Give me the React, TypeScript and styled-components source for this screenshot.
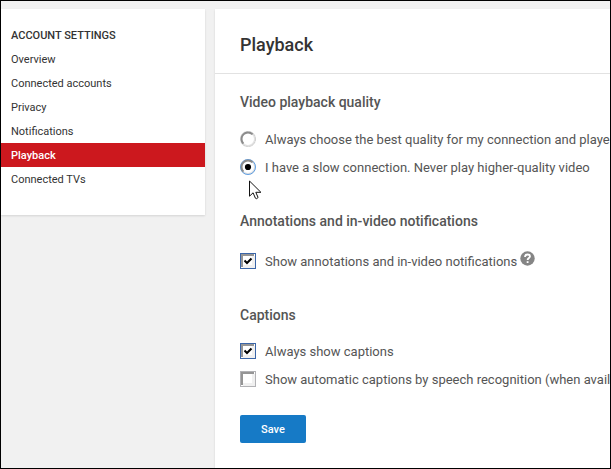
import React, { useState } from "react";
import styled, { createGlobalStyle } from "styled-components";

const GlobalStyle = createGlobalStyle`
  *, *::before, *::after { box-sizing: border-box; }
  body {
    margin: 0;
    font-family: Roboto, "Liberation Sans", sans-serif;
    font-size: 13px;
    color: #555;
    background: #f1f1f1;
  }
`;

const Page = styled.div`
  display: flex;
  align-items: flex-start;
  gap: 10px;
  min-height: 100vh;
  padding-top: 8px;
  border: 1px solid #000;
  background: #f1f1f1;
  overflow: hidden;
`;

const Sidebar = styled.nav`
  flex: none;
  width: 204px;
  padding: 14px 0 24px;
  background: #fff;
  box-shadow: 0 1px 2px rgba(0, 0, 0, 0.12);
`;

const SidebarTitle = styled.h2`
  margin: 0;
  padding: 2px 10px 0;
  font-size: 11px;
  font-weight: 500;
  line-height: 22px;
  color: #333;
  text-transform: uppercase;
`;

const NavList = styled.ul`
  margin: 0;
  padding: 0;
  list-style: none;
`;

const NavLink = styled.a<{ $active?: boolean }>`
  display: block;
  padding: 2px 10px 0;
  font-size: 11px;
  font-weight: ${(p) => (p.$active ? 500 : 400)};
  line-height: 22px;
  text-decoration: none;
  color: ${(p) => (p.$active ? "#fff" : "#333")};
  background: ${(p) => (p.$active ? "#cc181e" : "transparent")};
`;

const Main = styled.main`
  flex: 1;
  min-width: 0;
  align-self: stretch;
  background: #fff;
  box-shadow: 0 1px 2px rgba(0, 0, 0, 0.12);
  overflow: hidden;
  white-space: nowrap;
`;

const Header = styled.header`
  padding: 24px 25px 16px;
  border-bottom: 1px solid #e2e2e2;
`;

const Title = styled.h1`
  margin: 0;
  font-size: 18px;
  font-weight: 500;
  line-height: 24px;
  color: #333;
`;

const Form = styled.form`
  display: flex;
  flex-direction: column;
  align-items: flex-start;
  gap: 30px;
  padding: 18px 25px 24px;
`;

const Section = styled.section<{ $gap?: number }>`
  display: flex;
  flex-direction: column;
  gap: ${(p) => p.$gap ?? 12}px;
`;

const SectionTitle = styled.h2`
  margin: 0;
  font-size: 14px;
  font-weight: 500;
  line-height: 20px;
  color: #555;
`;

const Options = styled.div``;

const Row = styled.div`
  display: flex;
  align-items: center;
  height: 28px;
`;

const Label = styled.label`
  display: flex;
  align-items: center;
  gap: 9px;
`;

const LabelText = styled.span`
  padding-top: 2px;
  line-height: 20px;
`;

const Control = styled.span`
  position: relative;
  display: grid;
  flex: none;
  width: 16px;
  height: 16px;
`;

const Mark = styled.svg`
  position: absolute;
  inset: 0;
  width: 16px;
  height: 16px;
  overflow: visible;
  pointer-events: none;
`;

const Input = styled.input`
  appearance: none;
  width: 16px;
  height: 16px;
  margin: 0;
  background: #fff;
  border-radius: ${(p) => (p.type === "radio" ? "50%" : "0")};
`;

const Pointer = styled.svg`
  position: absolute;
  top: 21px;
  left: 9px;
  z-index: 1;
  width: 13px;
  height: 21px;
  pointer-events: none;
`;

const HelpButton = styled.button`
  display: flex;
  align-self: flex-start;
  margin: 4px 0 0 3px;
  padding: 0;
  border: 0;
  background: none;
`;

const SaveButton = styled.button`
  height: 28px;
  margin-top: -8px;
  min-width: 66px;
  padding: 2px 20px 0;
  border: 0;
  border-radius: 2px;
  background: #167ac6;
  color: #fff;
  font: 500 11px/26px Roboto, "Liberation Sans", sans-serif;
`;

type ChoiceProps = {
  id: string;
  checked: boolean;
  onChange: () => void;
  children: React.ReactNode;
};

function Radio({ id, checked, onChange, pointer, children }: ChoiceProps & { pointer?: boolean }) {
  return (
    <Label htmlFor={id}>
      <Control>
        <Input type="radio" id={id} name="quality" checked={checked} onChange={onChange} />
        <Mark viewBox="0 0 16 16" fill="none" aria-hidden="true">
          <circle cx="8" cy="8" r="7" stroke="#e2e2e2" strokeWidth="2" />
          <circle cx="8" cy="8" r="7.500" stroke={checked ? "#5d9fe6" : "#cfcfcf"} strokeDasharray={checked ? undefined : "2 1"} />
          <path d="M3.400 12.600A6.500 6.500 0 0 1 12.600 3.400" stroke="#8c8c8c" strokeWidth="2" />
          {checked && <circle cx="8" cy="8" r="3.100" fill="#000" />}
        </Mark>
        {pointer && (
          <Pointer viewBox="0 0 13 21" aria-hidden="true">
            <path
              d="M.5 1v15.200l3.600-3.400 2.300 5.400q1 1.300 2.700-.7l-2.300-5.200h5.100z"
              fill="#fff"
              stroke="#111"
              strokeWidth="1"
            />
          </Pointer>
        )}
      </Control>
      <LabelText>{children}</LabelText>
    </Label>
  );
}

function Checkbox({ id, checked, onChange, children }: ChoiceProps) {
  return (
    <Label htmlFor={id}>
      <Control>
        <Input type="checkbox" id={id} checked={checked} onChange={onChange} />
        <Mark viewBox="0 0 16 16" fill="none" aria-hidden="true">
          <path d="M3 13.500h10.500V3" stroke="#f0f0f0" strokeWidth="3" />
          <path d="M2 14V2h12" stroke="#959595" strokeWidth="2" />
          <rect x=".5" y=".5" width="15" height="15" stroke={checked ? "#3a65a8" : "#b2b2b5"} />
          {checked && <path d="M4.500 7.500 7 10l4.500-4.500" stroke="#000" strokeWidth="2" />}
        </Mark>
      </Control>
      <LabelText>{children}</LabelText>
    </Label>
  );
}

const links = ["Overview", "Connected accounts", "Privacy", "Notifications", "Playback", "Connected TVs"];

export default function App() {
  const [quality, setQuality] = useState("slow");
  const [annotations, setAnnotations] = useState(true);
  const [captions, setCaptions] = useState(true);
  const [automatic, setAutomatic] = useState(false);

  return (
    <>
      <GlobalStyle />
      <Page>
        <Sidebar aria-label="Account settings">
          <SidebarTitle>Account settings</SidebarTitle>
          <NavList>
            {links.map((name) => (
              <li key={name}>
                <NavLink href="#" $active={name === "Playback"} aria-current={name === "Playback" ? "page" : undefined}>
                  {name}
                </NavLink>
              </li>
            ))}
          </NavList>
        </Sidebar>
        <Main>
          <Header>
            <Title>Playback</Title>
          </Header>
          <Form onSubmit={(e) => e.preventDefault()}>
            <Section $gap={13}>
              <SectionTitle>Video playback quality</SectionTitle>
              <Options>
                <Row>
                  <Radio id="best" checked={quality === "best"} onChange={() => setQuality("best")}>
                    Always choose the best quality for my connection and playe
                  </Radio>
                </Row>
                <Row>
                  <Radio id="slow" checked={quality === "slow"} onChange={() => setQuality("slow")} pointer>
                    I have a slow connection. Never play higher-quality video
                  </Radio>
                </Row>
              </Options>
            </Section>
            <Section $gap={16}>
              <SectionTitle>Annotations and in-video notifications</SectionTitle>
              <Row>
                <Checkbox id="annotations" checked={annotations} onChange={() => setAnnotations(!annotations)}>
                  Show annotations and in-video notifications
                </Checkbox>
                <HelpButton type="button" aria-label="Help">
                  <svg width="15" height="15" viewBox="0 0 15 15" fill="none" aria-hidden="true">
                    <circle cx="7.500" cy="7.500" r="7.200" fill="#858585" />
                    <path d="M5 6c0-1.700 1-2.500 2.500-2.500S10 4.300 10 5.600C10 7 7.600 7.200 7.600 9" stroke="#fff" strokeWidth="1.800" />
                    <path d="M6.700 10.200h1.800V12H6.700z" fill="#fff" />
                  </svg>
                </HelpButton>
              </Row>
            </Section>
            <Section>
              <SectionTitle>Captions</SectionTitle>
              <Options>
                <Row>
                  <Checkbox id="captions" checked={captions} onChange={() => setCaptions(!captions)}>
                    Always show captions
                  </Checkbox>
                </Row>
                <Row>
                  <Checkbox id="automatic" checked={automatic} onChange={() => setAutomatic(!automatic)}>
                    Show automatic captions by speech recognition (when avail
                  </Checkbox>
                </Row>
              </Options>
            </Section>
            <SaveButton type="submit">Save</SaveButton>
          </Form>
        </Main>
      </Page>
    </>
  );
}
